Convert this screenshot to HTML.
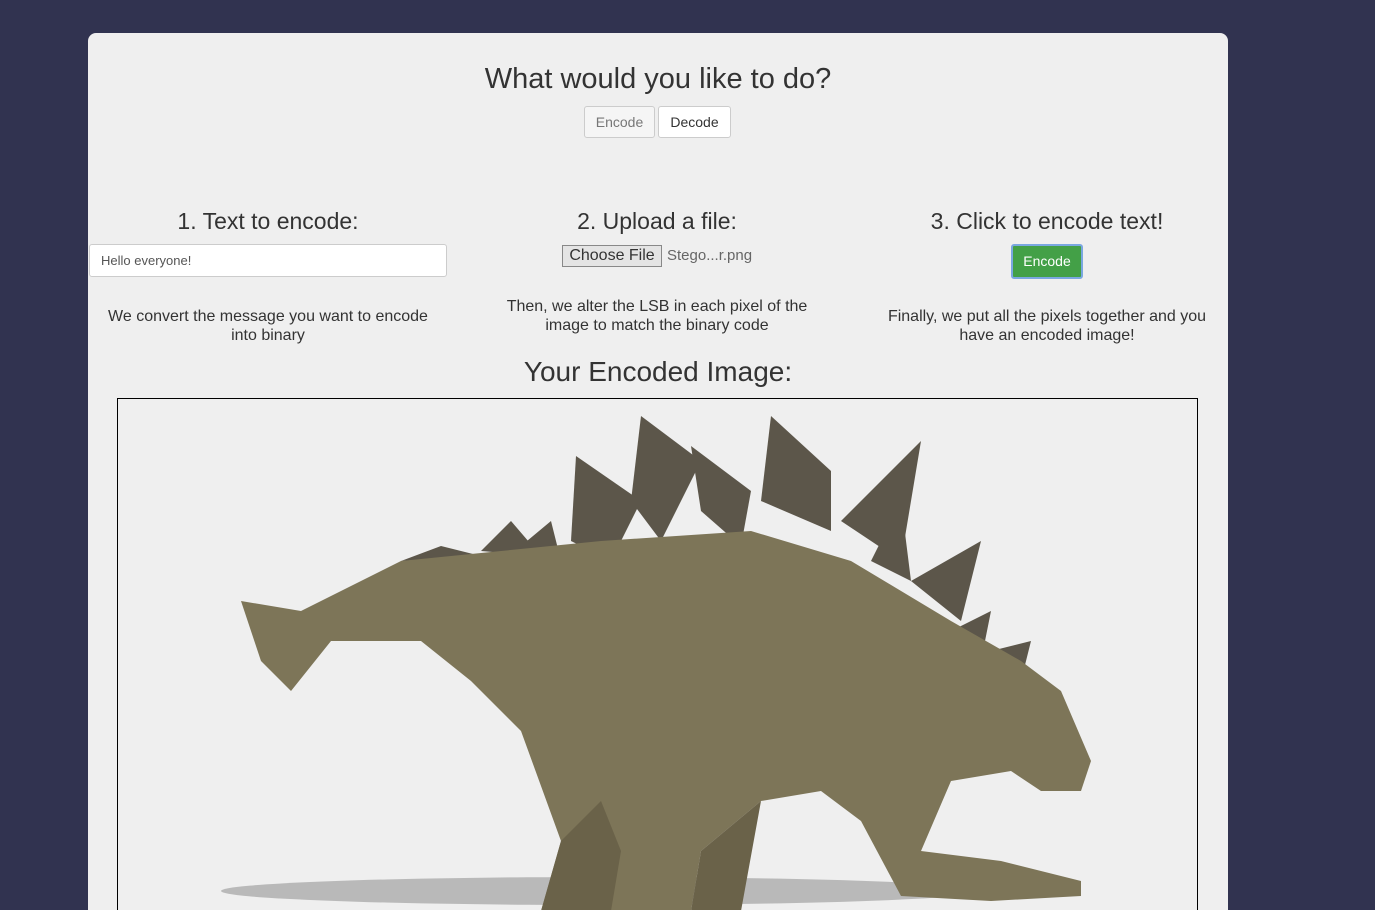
<!DOCTYPE html>
<html><head><style>
html,body{margin:0;width:1375px;height:910px;overflow:hidden}
body{background:#313350;font-family:"Liberation Sans",sans-serif;color:#333}
.card{position:absolute;left:88px;top:33px;width:1140px;height:877px;background:#efefef;border-radius:8px 8px 0 0;overflow:hidden}
.abs{position:absolute;text-align:center}
.btn{position:absolute;height:32px;box-sizing:border-box;border:1px solid #ccc;border-radius:3px;background:#fff;font-size:14px;line-height:30px;text-align:center}
.col{position:absolute;width:360px;text-align:center}
.col .t{font-size:23px;position:absolute;top:2px;left:0;right:0}
.col .d{font-size:16px;line-height:19px;position:absolute;left:-10px;right:-10px;white-space:nowrap}
</style></head><body>
<div class="card">
<div class="abs" style="left:0;right:0;top:30px;font-size:29px">What would you like to do?</div>
<div class="btn" style="left:496px;top:73px;width:71px;background:#f5f5f5;color:#777">Encode</div>
<div class="btn" style="left:570px;top:73px;width:73px;color:#333">Decode</div>

<div class="col" style="left:0;top:173px">
 <div class="t">1. Text to encode:</div>
 <div style="position:absolute;left:1px;top:38px;width:358px;height:33px;box-sizing:border-box;background:#fff;border:1px solid #ccc;border-radius:3px;text-align:left;padding-left:11px;font-size:13px;line-height:31px;color:#555">Hello everyone!</div>
 <div class="d" style="top:101px">We convert the message you want to encode<br>into binary</div>
</div>
<div class="col" style="left:389px;top:173px">
 <div class="t">2. Upload a file:</div>
 <div style="position:absolute;left:85px;top:39px;width:100px;height:22px;box-sizing:border-box;background:#e4e4e4;border:1px solid #888;font-size:16px;line-height:20px">Choose File</div>
 <div style="position:absolute;left:190px;top:39px;font-size:15px;line-height:22px;color:#666">Stego...r.png</div>
 <div class="d" style="top:91px">Then, we alter the LSB in each pixel of the<br>image to match the binary code</div>
</div>
<div class="col" style="left:779px;top:173px">
 <div class="t">3. Click to encode text!</div>
 <div style="position:absolute;left:144px;top:38px;width:72px;height:35px;box-sizing:border-box;background:#43a047;border:2px solid #7aa7e0;border-radius:3px;color:#fff;font-size:14px;line-height:31px">Encode</div>
 <div class="d" style="top:101px">Finally, we put all the pixels together and you<br>have an encoded image!</div>
</div>
<div class="abs" style="left:0;right:0;top:323px;font-size:28px">Your Encoded Image:</div>
<div style="position:absolute;left:29px;top:365px;width:1079px;height:520px;border:1px solid #000;border-bottom:none;overflow:hidden">
<svg width="1079" height="520" viewBox="117 398 1079 520">
<ellipse cx="600" cy="890" rx="380" ry="14" fill="#555" opacity=".35"/>
<g fill="#5c564a">
<polygon points="630,500 640,415 700,460 660,540"/>
<polygon points="570,540 575,455 640,500 610,560"/>
<polygon points="700,510 690,445 750,490 740,545"/>
<polygon points="760,500 770,415 830,470 830,530"/>
<polygon points="840,520 920,440 900,560"/>
<polygon points="870,560 900,500 910,580"/>
<polygon points="910,580 980,540 960,620"/>
<polygon points="950,630 990,610 980,660"/>
<polygon points="990,650 1030,640 1020,680"/>
<polygon points="480,550 510,520 540,555"/>
<polygon points="520,545 550,520 560,560"/>
<polygon points="400,560 440,545 480,555"/>
</g>
<path fill="#7d7558" d="M240,600 L300,610 L400,560 L500,550 L600,540 L750,530 L850,560 L950,620 L1020,660 L1060,690 L1090,760 L1080,790 L1040,790 L1010,770 L950,780 L920,850 L1000,860 L1080,880 L1080,895 L990,900 L900,895 L860,820 L820,790 L760,800 L700,850 L690,910 L540,910 L560,840 L520,730 L470,680 L420,640 L330,640 L290,690 L260,660 Z"/>
<path fill="#6a6249" d="M540,910 L560,840 L600,800 L620,850 L610,910 Z M690,910 L700,850 L760,800 L740,910 Z"/>
</svg>
</div>
</div>
</body></html>
